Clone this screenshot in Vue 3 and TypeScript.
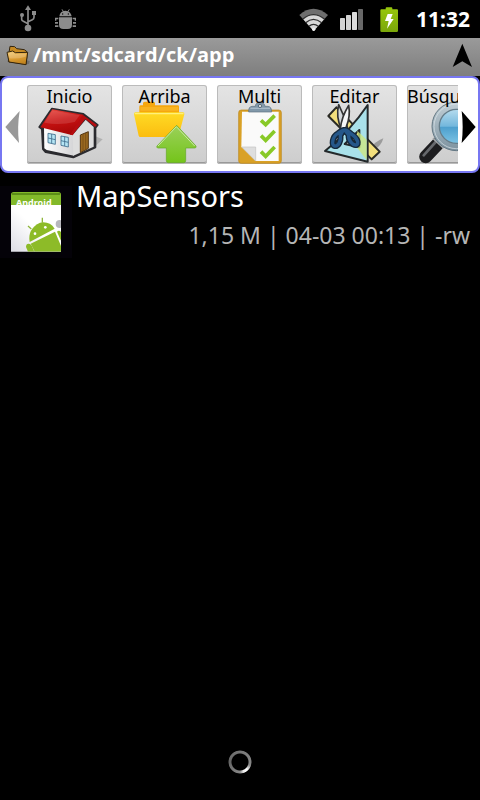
<script setup lang="ts">
import { ref } from 'vue'

type IconName = 'home' | 'up' | 'multi' | 'edit' | 'search'

interface Tool {
  label: string
  icon: IconName
  viewBox: string
}

interface Entry {
  name: string
  size: string
  modified: string
  mode: string
}

const path = ref('/mnt/sdcard/ck/app')
const time = ref('11:32')

const tools: Tool[] = [
  { label: 'Inicio', icon: 'home', viewBox: '81 33 255 237' },
  { label: 'Arriba', icon: 'up', viewBox: '18 33 255 237' },
  { label: 'Multi', icon: 'multi', viewBox: '21 33 255 237' },
  { label: 'Editar', icon: 'edit', viewBox: '24 33 255 237' },
  { label: 'Búsqueda', icon: 'search', viewBox: '33 33 255 237' },
]

const entries = ref<Entry[]>([
  { name: 'MapSensors', size: '1,15 M', modified: '04-03 00:13', mode: '-rw' },
])
</script>

<template>
  <div class="screen">
    <div class="status">
      <svg class="usb" viewBox="54 15 60 84" aria-hidden="true">
        <g fill="none" stroke="#8c8c8c" stroke-width="5">
          <path d="M84 28V82M65 48v10q0 4 5 6l14 7M102 42v10q0 5-5 7l-13 6" />
        </g>
        <g fill="#8c8c8c">
          <path d="M84 16l9 14H75z" />
          <circle cx="84" cy="84" r="10" />
          <circle cx="66" cy="45" r="6" />
          <path d="M96 33h12v12H96z" />
        </g>
      </svg>
      <svg class="bug" viewBox="162 21 69 69" aria-hidden="true">
        <g fill="#8c8c8c">
          <path d="M178 46q2-16 18-17 16 1 19 17z" />
          <path d="M177 49h39v22q0 13-13 13h-13q-13 0-13-13z" />
          <path d="M165 50h10v5h-6v4h-4zM218 50h10v9h-4v-4h-6zM165 63h9v5h-9zM219 63h9v5h-9zM165 73h10v5h-10zM218 73h10v5h-10z" />
        </g>
        <path d="M186 25l5 8M208 25l-5 8" stroke="#8c8c8c" stroke-width="3" />
        <circle cx="188" cy="39" r="2" /><circle cx="205" cy="39" r="2" />
      </svg>
      <span class="spacer"></span>
      <svg class="wifi" viewBox="174 18 93 75" aria-hidden="true">
        <path d="M178 42Q220 5 264 42L221 90z" fill="#6e6e6e" />
        <path d="M189 54Q220 26 253 54L221 90z" fill="#d8d8d8" />
        <g fill="none" stroke="#303030" stroke-width="4">
          <path d="M188 55q32-28 66 0M197 65q23-20 48 0M207 76q13-12 28 0" />
        </g>
        <circle cx="221" cy="85" r="5" fill="#eee" />
      </svg>
      <svg class="signal" viewBox="297 24 75 69" aria-hidden="true">
        <rect x="300" y="54" width="15" height="36" rx="2" fill="#d2d2d2" />
        <rect x="318" y="45" width="15" height="45" rx="2" fill="#d2d2d2" />
        <rect x="336" y="36" width="15" height="54" rx="2" fill="#dcdcdc" />
        <rect x="354" y="27" width="15" height="63" rx="2" fill="#686868" />
      </svg>
      <svg class="battery" viewBox="417 15 60 81" aria-hidden="true">
        <defs>
          <linearGradient id="bt" x1="0" y1="0" x2="0" y2="1">
            <stop offset="0" stop-color="#98c80c" /><stop offset="1" stop-color="#7aa60a" />
          </linearGradient>
        </defs>
        <path d="M424 25h13v-3q0-3 3-3h14q3 0 3 3v3h14q3 0 3 3v61q0 4-4 4h-45q-4 0-4-4V28q0-3 3-3z" fill="url(#bt)" />
        <path d="M443 39h15l-6 15h9l-20 29 5-23h-11z" fill="#fff" />
      </svg>
      <time class="clock">{{ time }}</time>
    </div>

    <header class="title">
      <svg class="folder" viewBox="15 126 75 69" aria-hidden="true">
        <defs>
          <linearGradient id="fd" x1="0" y1="0" x2="0.3" y2="1">
            <stop offset="0" stop-color="#f0c870" /><stop offset="0.55" stop-color="#dd9f36" /><stop offset="1" stop-color="#c3851f" />
          </linearGradient>
        </defs>
        <path d="M72 190l15-5 2-7-8-3z" fill="#555" opacity=".5" />
        <path d="M27 152l3-19 14 1 6 6 23 3 9 7-4 37-53-8z" fill="#c68a23" stroke="#33250f" stroke-width="3" stroke-linejoin="round" />
        <path d="M21 151l17-4 8 5 37-1-5 37-51-8z" fill="url(#fd)" stroke="#33250f" stroke-width="3" stroke-linejoin="round" />
        <path d="M25 154l13-3 8 5 32-1-1 9q-26 8-49 5z" fill="#fff" opacity=".2" />
      </svg>
      <h1 class="path">{{ path }}</h1>
      <button class="top" type="button" aria-label="Subir">
        <svg viewBox="636 126 63 75" aria-hidden="true"><path d="M667 128l29 70-29-17-29 17z" /></svg>
      </button>
    </header>

    <nav class="toolbar">
      <button class="arrow" type="button" aria-label="Anterior">
        <svg viewBox="15 108 45 102" aria-hidden="true"><path d="M59 111q-8 47-2 96L16 159z" fill="#999" /></svg>
      </button>
      <div class="tools">
        <button v-for="tool in tools" :key="tool.icon" class="tool" type="button">
          <svg class="art" :viewBox="tool.viewBox" aria-hidden="true">
            <g v-if="tool.icon === 'home'">
              <defs>
                <linearGradient id="roof" x1="0" y1="0" x2="0.3" y2="1">
                  <stop offset="0" stop-color="#e8473e" /><stop offset="0.5" stop-color="#c81212" /><stop offset="1" stop-color="#a80808" />
                </linearGradient>
                <linearGradient id="wall" x1="0" y1="0" x2="1" y2="0">
                  <stop offset="0" stop-color="#fff" /><stop offset="1" stop-color="#d4d4d6" />
                </linearGradient>
              </defs>
              <path d="M284 186l24 10-24 22z" fill="#999" opacity=".6" />
              <path d="M156 104l94 16 43 33-7 9v58l-66 30-83-16-8-9-3-60-8-6z" fill="#2b2b2f" stroke="#2b2b2f" stroke-width="6" stroke-linejoin="round" />
              <path d="M132 160l90 22v63l-82-17-7-5z" fill="url(#wall)" />
              <path d="M218 183l39-46 24 22v59l-61 27z" fill="#ddd" />
              <path d="M157 106l93 16-32 62-97-24z" fill="url(#roof)" />
              <path d="M248 122l43 31-6 6-29-24-38 48-8 0z" fill="#b70d10" />
              <path d="M157 109l82 15-15 20q-46 11-91 2z" fill="#fff" opacity=".13" />
              <path d="M241 183l24-10v50l-24 13z" fill="#9a6820" stroke="#553611" stroke-width="3" />
              <path d="M249 181v49M257 177v49" stroke="#6d4613" stroke-width="2" />
              <g fill="#b5e5f4" stroke="#3d6b8c" stroke-width="2.5">
                <path d="M144 178l22 4v29l-22-5zM183 186l22 4v29l-22-5z" />
                <path d="M155 180v28M144 192l22 5M194 188v28M183 200l22 5" fill="none" />
              </g>
            </g>

            <g v-else-if="tool.icon === 'up'">
              <defs>
                <linearGradient id="yl" x1="0" y1="0" x2="0" y2="1">
                  <stop offset="0" stop-color="#ffdb25" /><stop offset="1" stop-color="#fbbd10" />
                </linearGradient>
                <linearGradient id="gr" x1="0" y1="0" x2="0" y2="1">
                  <stop offset="0" stop-color="#9bd15a" /><stop offset="1" stop-color="#74c41a" />
                </linearGradient>
              </defs>
              <path d="M70 118V98q0-4 4-4h7v-6q0-5 5-5h26q5 0 5 5v6h68q4 0 4 4v20z" fill="#f6a70e" />
              <path d="M73 99h113v11H73z" fill="#ffc93e" opacity=".4" />
              <path d="M59 115h142q5 0 4 6l-17 64q-1 4-5 4H73q-4 0-5-4L54 121q-1-6 5-6z" fill="url(#yl)" />
              <path d="M58 119h143" stroke="#fff07a" stroke-width="4" stroke-linecap="round" />
              <path d="M182 154l58 62q2 5-3 6h-28v38q0 6-6 6h-46q-6 0-6-6v-38h-25q-6-1-3-6z" fill="url(#gr)" stroke="#62a824" stroke-width="2" stroke-linejoin="round" />
              <path d="M126 216l55-58 55 58" fill="none" stroke="#caeaa4" stroke-width="3" />
            </g>

            <g v-else-if="tool.icon === 'multi'">
              <rect x="86" y="108" width="128" height="160" rx="8" fill="#d9a126" stroke="#b98315" stroke-width="2" />
              <path d="M96 113h110v148h-69L94 219z" fill="#fafafa" />
              <path d="M96 219h41v42z" fill="#dedede" stroke="#c2c2c2" stroke-width="2" />
              <path d="M116 114q-1-16 10-17h10q0-11 14-12 14 1 15 12h9q11 1 11 17z" fill="#8198aa" stroke="#5d7181" stroke-width="2" />
              <path d="M121 103h59" stroke="#a9bac7" stroke-width="4" />
              <circle cx="150" cy="96" r="5" fill="#d7d7d7" stroke="#5d7181" stroke-width="3" />
              <g fill="none" stroke="#88c927" stroke-width="11">
                <path d="M153 139l14 13 27-27M153 185l14 14 27-28M153 233l14 14 27-28" />
              </g>
            </g>

            <g v-else-if="tool.icon === 'edit'">
              <path d="M200 224q10-20 38-31-6 22-26 34z" fill="#777" opacity=".6" />
              <path d="M73 126l24-26 130 133-24 23z" fill="#f3df7c" stroke="#2a2a24" stroke-width="6" stroke-linejoin="round" />
              <path d="M191 93v170L63 231q74-58 128-138zM166 168l-44 42 44 10z" fill="#a9e1ea" fill-rule="evenodd" stroke="#24292b" stroke-width="6" stroke-linejoin="round" />
              <path d="M160 170l28 27v61l-28-36z" fill="#cfe77b" opacity=".75" />
              <path d="M104 92q-9 34 8 74l10 12 10-12q-9-38-28-74z" fill="#d3d7da" stroke="#333" stroke-width="5" stroke-linejoin="round" />
              <path d="M134 94q6 32-7 64l-8 14-10-8q4-36 25-70z" fill="#f6f7f8" stroke="#333" stroke-width="5" stroke-linejoin="round" />
              <g fill="none" stroke="#14283c" stroke-width="18" stroke-linejoin="round">
                <path d="M118 168q-2-1-16 10c-18 10-20 36-10 38s20-14 17-32zM122 168q4-2 20 12c20 12 24 32 14 33s-24-14-22-30z" />
              </g>
              <g fill="none" stroke="#25578a" stroke-width="10" stroke-linejoin="round">
                <path d="M118 168q-2-1-16 10c-18 10-20 36-10 38s20-14 17-32zM122 168q4-2 20 12c20 12 24 32 14 33s-24-14-22-30z" />
              </g>
            </g>

            <g v-else>
              <defs>
                <linearGradient id="lens" x1="0" y1="0" x2="0" y2="1">
                  <stop offset="0" stop-color="#b6dcee" /><stop offset="0.5" stop-color="#73b7dc" /><stop offset="0.52" stop-color="#4d9fcd" /><stop offset="1" stop-color="#7cc3e4" />
                </linearGradient>
                <linearGradient id="ring" x1="0" y1="0" x2="0" y2="1">
                  <stop offset="0" stop-color="#c3d0d7" /><stop offset="1" stop-color="#7d929f" />
                </linearGradient>
              </defs>
              <path d="M128 207l-39 41" stroke="#1d1d1f" stroke-width="39" stroke-linecap="round" />
              <path d="M119 204l-36 40" stroke="#66686c" stroke-width="8" stroke-linecap="round" />
              <path d="M111 193l32 29" stroke="#a1a5a8" stroke-width="6" />
              <circle cx="181" cy="157" r="73" fill="url(#ring)" stroke="#637783" stroke-width="3" />
              <circle cx="181" cy="157" r="67" fill="none" stroke="#dce5ea" stroke-width="2" />
              <circle cx="181" cy="157" r="51" fill="url(#lens)" stroke="#657d8a" stroke-width="4" />
            </g>
          </svg>
          <span class="label">{{ tool.label }}</span>
        </button>
      </div>
      <button class="arrow" type="button" aria-label="Siguiente">
        <svg viewBox="194 108 45 102" aria-hidden="true"><path d="M196 111q6 48 0 96l42-48z" fill="#000" /></svg>
      </button>
    </nav>

    <main class="files">
      <ul class="list">
        <li v-for="entry in entries" :key="entry.name" class="entry">
          <svg class="apk" viewBox="0 0 216 216" aria-hidden="true">
            <defs>
              <linearGradient id="page" x1="0" y1="1" x2="1" y2="0">
                <stop offset="0" stop-color="#dcdce4" /><stop offset="0.5" stop-color="#fff" />
              </linearGradient>
              <clipPath id="pg"><path d="M33 18h150v179H33z" /></clipPath>
              <clipPath id="band"><path d="M33 18h150v39H33z" /></clipPath>
            </defs>
            <rect width="216" height="216" fill="#040208" />
            <path d="M33 57h150v140H33z" fill="url(#page)" />
            <path d="M33 57V26q0-8 8-8h134q8 0 8 8v31z" fill="#82b92a" />
            <path d="M36 24h144" stroke="#5c8d17" stroke-width="6" />
            <text x="48" y="60" class="apk-text" clip-path="url(#band)">Android</text>
            <g clip-path="url(#pg)">
              <circle cx="179" cy="114" r="12" fill="#b7b7bd" />
              <path d="M94 129l-10-9M127 110V95" stroke="#8fb63c" stroke-width="4" />
              <path d="M89 168q-7-40 31-58 29-5 44 18z" fill="#8dbb28" />
              <path d="M92 173l73-36 25 60h-86z" fill="#8dbb28" />
              <path d="M78 183q0-11 9-10 6 1 9 8l7 16H84zM171 137q6-6 12 1v26z" fill="#8dbb28" />
              <circle cx="105" cy="143" r="4" fill="#fff" /><circle cx="136" cy="124" r="4" fill="#fff" />
            </g>
          </svg>
          <div class="info">
            <a class="name" href="#">{{ entry.name }}</a>
            <span class="meta">{{ entry.size }} | {{ entry.modified }} | {{ entry.mode }}</span>
          </div>
        </li>
      </ul>
    </main>

    <footer class="loading" role="status" aria-label="Cargando">
      <span class="spinner"></span>
    </footer>
  </div>
</template>

<style>
body {
  margin: 0;
  background: #000;
}
</style>

<style scoped>
.screen {
  display: flex;
  flex-direction: column;
  min-height: 100vh;
  background: #000;
  color: #fff;
  font-family: 'Noto Sans', 'Open Sans', sans-serif;
}

button {
  margin: 0;
  padding: 0;
  border: 0;
  background: none;
  font: inherit;
  color: inherit;
}

svg {
  display: block;
  flex: none;
}

.status {
  display: flex;
  align-items: center;
  height: 38px;
  padding: 0 10px 0 18px;
}

.usb {
  width: 20px;
  height: 28px;
}

.bug {
  width: 23px;
  height: 23px;
  margin-left: 16px;
}

.spacer {
  flex: 1;
}

.wifi {
  width: 31px;
  height: 25px;
}

.signal {
  width: 25px;
  height: 23px;
  margin-left: 10px;
}

.battery {
  width: 20px;
  height: 27px;
  margin-left: 15px;
}

.clock {
  margin-left: 17px;
  font-size: 21px;
  line-height: 28px;
  font-weight: 700;
}

.title {
  display: flex;
  align-items: center;
  height: 38px;
  padding: 0 7px 0 5px;
  background: linear-gradient(#9a9a9a, #7e7e7e);
}

.folder {
  width: 25px;
  height: 23px;
  margin-bottom: 4px;
}

.path {
  flex: 1;
  margin: 0 0 4px 3px;
  font-family: 'Open Sans', 'Noto Sans', sans-serif;
  font-size: 20px;
  line-height: 28px;
  font-weight: 700;
}

.top svg {
  width: 21px;
  height: 25px;
  margin-bottom: 4px;
}

.toolbar {
  display: flex;
  align-items: center;
  height: 93px;
  border: 2px solid #7777f2;
  border-radius: 8px;
  background: #fff;
}

.arrow {
  flex: none;
  padding: 4px 2px 0 3px;
}

.arrow svg {
  width: 15px;
  height: 34px;
}

.tools {
  display: flex;
  flex: 1;
  gap: 10px;
  min-width: 0;
  padding-left: 5px;
  overflow: hidden;
}

.tool {
  display: grid;
  flex: none;
  grid-template-columns: 85px;
  grid-template-rows: 79px;
  border-radius: 3px;
  background: linear-gradient(#e4e4e4, #cdcdcd);
  box-shadow: inset 0 0 0 1px #bbb, inset 0 -2px 0 #999;
}

.art,
.label {
  grid-area: 1 / 1;
}

.art {
  width: 85px;
  height: 79px;
}

.label {
  z-index: 1;
  align-self: start;
  justify-self: center;
  color: #000;
  font-size: 18px;
  line-height: 22px;
  white-space: nowrap;
}

.files {
  flex: 1;
  padding-top: 4px;
}

.list {
  margin: 0;
  padding: 0;
  list-style: none;
}

.entry {
  display: flex;
  align-items: flex-start;
  padding-right: 10px;
}

.apk {
  width: 72px;
  height: 72px;
  margin-top: 9px;
}

.apk-text {
  fill: #fff;
  font-size: 27px;
  font-weight: 700;
}

.info {
  display: flex;
  flex: 1;
  flex-direction: column;
  padding-left: 4px;
}

.name {
  color: #fff;
  font-size: 29px;
  line-height: 38px;
  text-decoration: none;
}

.meta {
  color: #b5b5b5;
  font-size: 23px;
  line-height: 40px;
  text-align: right;
}

.loading {
  display: flex;
  justify-content: center;
  padding-bottom: 26px;
}

.spinner {
  width: 24px;
  height: 24px;
  border-radius: 50%;
  background: conic-gradient(#777, #888 30%, #fff 38%, #eee 44%, #888 50%, #666 75%, #777);
  mask: radial-gradient(circle, transparent 8px, #000 9px, #000 11px, transparent 12px);
}
</style>
